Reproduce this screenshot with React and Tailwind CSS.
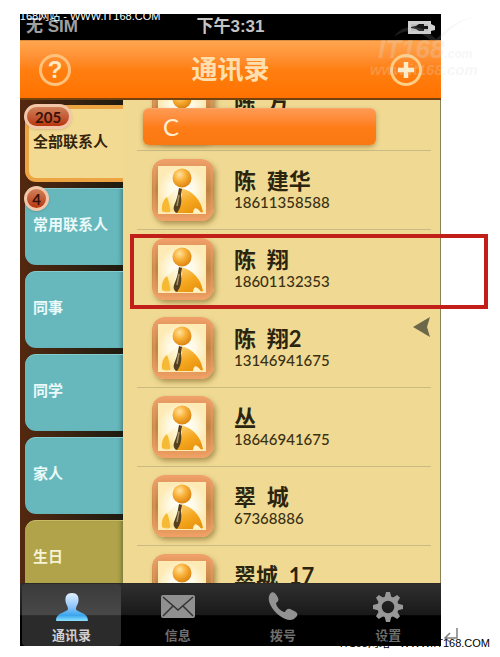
import React from 'react';

const groups = [
    { id: 'all', label: '全部联系人', count: 205, active: true },
    { id: 'favorites', label: '常用联系人', count: 4 },
    { id: 'coworkers', label: '同事' },
    { id: 'classmates', label: '同学' },
    { id: 'family', label: '家人' },
    { id: 'birthday', label: '生日', olive: true }
];

const contacts = [
    { name: '陈  方', phone: '' },
    { name: '陈  建华', phone: '18611358588' },
    { name: '陈  翔', phone: '18601132353' },
    { name: '陈  翔2', phone: '13146941675' },
    { name: '丛', phone: '18646941675' },
    { name: '翠  城', phone: '67368886' },
    { name: '翠城  17', phone: '' }
];

const Defs = () => (
    <svg width="0" height="0" className="absolute" aria-hidden="true">
        <defs>
            <linearGradient id="frame" x1="0" y1="0" x2="0" y2="1">
                <stop offset="0" stopColor="#f0a06a" />
                <stop offset="0.5" stopColor="#bd8440" />
                <stop offset="1" stopColor="#f0a064" />
            </linearGradient>
            <radialGradient id="paper">
                <stop offset="0" stopColor="#ffffff" />
                <stop offset="0.5" stopColor="#fffbe9" />
                <stop offset="1" stopColor="#fdeab4" />
            </radialGradient>
            <radialGradient id="head" cx="0.38" cy="0.32" r="0.7">
                <stop offset="0" stopColor="#ffe3a0" />
                <stop offset="0.5" stopColor="#f8ae34" />
                <stop offset="1" stopColor="#dc8410" />
            </radialGradient>
            <linearGradient id="suit" x1="0" y1="0" x2="0.6" y2="1">
                <stop offset="0" stopColor="#fdd684" />
                <stop offset="0.6" stopColor="#f6a81f" />
                <stop offset="1" stopColor="#e99410" />
            </linearGradient>
            <linearGradient id="arm" x1="1" y1="0" x2="0" y2="1">
                <stop offset="0" stopColor="#fffdf2" />
                <stop offset="0.5" stopColor="#fdedb6" />
                <stop offset="1" stopColor="#f5b62c" />
            </linearGradient>
            <linearGradient id="person" x1="0" y1="0" x2="0" y2="1">
                <stop offset="0" stopColor="#e4f0ff" />
                <stop offset="0.5" stopColor="#8cc4fa" />
                <stop offset="0.8" stopColor="#3ba6ee" />
                <stop offset="1" stopColor="#8be2ff" />
            </linearGradient>
        </defs>
    </svg>
);

const Avatar = () => (
    <svg viewBox="0 0 62 62" className="size-[62px] shrink-0 rounded-[13px] shadow-[2px_3px_5px_rgba(110,80,20,0.5)]" aria-hidden="true">
        <rect width="62" height="62" rx="12" fill="url(#frame)" />
        <rect x="2" y="2" width="58" height="58" rx="10" fill="none" stroke="#f2a36c" strokeWidth="3" opacity="0.4" />
        <rect x="6" y="7" width="48" height="48" fill="url(#paper)" />
        <path d="M27 29 C19 33 11 41 10 52 C14 54 17 54 19 52 L22 53 C24 46 25 36 27 29Z" fill="url(#arm)" />
        <path d="M10 52 C9 45 12 40 15 38 C17 43 18 48 18 53Z" fill="#f5b933" />
        <path d="M29 29 C41 32 49 41 51 53 C48 55 46 50 43 49 L42 54 L23 54 C29 45 31 37 29 29Z" fill="url(#suit)" />
        <path d="M41 54 C41 48 46 48 49 54Z" fill="#fff2c8" />
        <path d="M27 29 L30 30 L29 36 C30 43 29 49 25 54 C22 53 21 50 22 47 C24 42 26 36 26 34Z" fill="#54401f" />
        <path d="M27 36 L25 47" stroke="#a89264" strokeWidth="1.5" />
        <circle cx="30" cy="19" r="9.5" fill="url(#head)" />
    </svg>
);

const GroupTab = ({ group }) => {
    const color = group.active
        ? 'bg-[#f2da92] text-[#33240b] border-4 border-r-0 border-[#eda544]'
        : group.olive
            ? 'bg-[#b0a349] text-[#f6f2d4] border-t border-[#c6bb66] shadow-[inset_-5px_0_5px_-4px_rgba(30,50,40,0.5)]'
            : 'bg-[#67b8bd] text-[#eafafa] border-t border-[#86cccf] shadow-[inset_-5px_0_5px_-4px_rgba(30,50,40,0.5)]';

    return (
        <button className={`relative flex h-[77px] w-full shrink-0 items-center rounded-l-[11px] text-[15px] leading-5 font-bold ${group.active ? 'pl-1' : 'pl-2'} pb-1 ${color}`}>
            {group.label}
            {group.count && (
                <span className={`absolute ${group.active ? '-left-[5px] -top-[5px]' : '-left-px -top-[3px]'} flex h-[25px] min-w-[25px] items-center justify-center rounded-full border-[3px] border-[#f2c7a9] bg-linear-to-b from-[#cf8058] to-[#b8330a] font-['Lato',sans-serif] text-[15px] leading-5 font-bold text-[#381208] shadow ${group.count > 9 ? 'px-2' : ''}`}>
                    {group.count}
                </span>
            )}
        </button>
    );
};

const ContactRow = ({ contact }) => (
    <li className="flex h-[79px] shrink-0 items-center border-b border-[#c9bb83] pl-[15px]">
        <Avatar />
        <div className="ml-5 flex h-[42px] flex-col whitespace-pre text-[#2b240f]">
            <span className="font-['Lato','Noto_Sans_CJK_SC',sans-serif] text-[22px] leading-6 font-bold">{contact.name}</span>
            <span className="font-['Lato',sans-serif] text-[15px] leading-[18px] font-medium text-[#3a3113]">{contact.phone}</span>
        </div>
    </li>
);

const ContactsIcon = () => (
    <svg viewBox="0 0 34 30" className="h-[30px] w-[34px]" aria-hidden="true">
        <path d="M17 1 C22 1 24 4 23.500 9 C23 13 21 14 21 17 C21 20 32 20 33 28 C33 29 32 29 31 29 L3 29 C2 29 1 29 1 28 C2 20 13 20 13 17 C13 14 11 13 10.500 9 C10 4 12 1 17 1Z" fill="url(#person)" />
    </svg>
);

const MailIcon = () => (
    <svg viewBox="0 0 34 30" className="h-[30px] w-[34px]" aria-hidden="true">
        <rect x="0" y="3" width="34" height="23" rx="2" fill="#909090" />
        <path d="M2 5 L17 18 L32 5 M2 24 L12 14 M32 24 L22 14" fill="none" stroke="#333" strokeWidth="1.5" />
    </svg>
);

const PhoneIcon = () => (
    <svg viewBox="0 0 34 30" className="h-[30px] w-[34px]" aria-hidden="true">
        <path d="M4 2 C6 -1 9 0 11 4 C13 7 13 9 10 11 C10 14 15 20 19 20 C21 16 23 16 26 18 C31 20 33 22 30 25 C27 29 21 29 14 24 C6 18 0 8 4 2Z" fill="#929292" />
    </svg>
);

const GearIcon = () => (
    <svg viewBox="0 0 34 30" className="h-[30px] w-[34px]" aria-hidden="true">
        <g transform="translate(17 15)" fill="#989898">
            {[0, 45, 90, 135, 180, 225, 270, 315].map((angle) => (
                <path key={angle} d="M-3.500 -9 L-2 -15 L2 -15 L3.500 -9Z" transform={`rotate(${angle})`} />
            ))}
            <circle r="8.5" fill="none" stroke="#989898" strokeWidth="4.5" />
        </g>
    </svg>
);

const tabs = [
    { label: '通讯录', icon: ContactsIcon, active: true },
    { label: '信息', icon: MailIcon },
    { label: '拨号', icon: PhoneIcon },
    { label: '设置', icon: GearIcon }
];

const StatusBar = () => (
    <div className="grid h-[26px] shrink-0 grid-cols-3 items-center bg-black px-[6px] text-[17px] leading-6 font-bold text-[#a0a0a0]">
        <span>无 SIM</span>
        <span className="text-center text-[#c4c4c4]">下午3:31</span>
        <svg viewBox="0 0 27 13" className="h-[13px] w-[27px] justify-self-end" aria-label="Battery">
            <path d="M0 0 H23 V3 L27 5 V9 L23 10 V13 H0Z" fill="#cfcfcf" />
            <path d="M3 3 H20 V10 H3Z" fill="#bdbdbd" />
            <path d="M3 6 L8 5 L11 3 H16 V5 H20 V8 H16 V10 H11 L8 8 L3 7Z" fill="#161616" />
        </svg>
    </div>
);

const Header = () => (
    <header className="flex h-[58px] shrink-0 items-center justify-between border-t border-[#d98b40] bg-linear-to-b from-[#ffa64f] via-[#ff7f10] to-[#ff7200] px-[19px] text-[#ffdfae]">
        <button aria-label="Help" className="flex size-8 items-center justify-center rounded-full border-[3px] border-[#ffc27c] font-['Liberation_Sans',sans-serif] text-2xl leading-6 font-bold text-[#ffe9c4]">?</button>
        <h1 className="text-[26px] leading-8 font-bold">通讯录</h1>
        <button aria-label="Add contact" className="flex size-8 items-center justify-center rounded-full border-[3px] border-[#ffcd85]">
            <svg viewBox="0 0 18 18" className="size-[18px]" aria-hidden="true">
                <path d="M9 1 V17 M1 9 H17" stroke="#ffedc8" strokeWidth="4.500" />
            </svg>
        </button>
    </header>
);

const TabBar = () => (
    <nav className="grid h-[63px] shrink-0 grid-cols-4 border-t border-[#2c2a26] bg-[linear-gradient(#2f2f2f_0,#191919_50%,#000_51%)]">
        {tabs.map(({ label, icon: Icon, active }) => (
            <button
                key={label}
                className={`flex flex-col items-center gap-1 pt-2 text-[13px] leading-5 font-bold ${active ? 'mb-[3px] ml-[2px] mr-1 rounded bg-[linear-gradient(#3b3b3b,#484848_50%,#2b2b2b_51%)] text-[#d0d0d0]' : 'text-[#6e6e6e]'}`}
            >
                <Icon />
                {label}
            </button>
        ))}
    </nav>
);

const Watermark = () => (
    <div className="pointer-events-none absolute right-5 top-[17px] w-[110px] font-['Liberation_Sans',sans-serif] font-bold italic text-[#dedede]/25">
        <svg viewBox="0 0 110 24" className="w-full" aria-hidden="true">
            <path d="M24 20 C30 10 44 6 56 14 L66 22 C78 10 90 2 104 0 C90 4 78 12 70 23 L60 23 C48 12 34 12 24 20Z" fill="#cccccc" opacity="0.15" />
        </svg>
        <div className="-mt-1 pl-2 text-[26px] leading-6">IT168<span className="text-xs">.com</span></div>
        <div className="text-[15px] leading-4">www.it168.com</div>
    </div>
);

export default function App() {
    return (
        <div className="relative flex h-screen flex-col overflow-hidden bg-white pt-[14px] pr-[59px] pb-[11px] pl-5 font-['Liberation_Sans','Noto_Sans_CJK_SC',sans-serif]">
            <Defs />
            <main className="flex min-h-0 flex-1 flex-col overflow-hidden">
                <StatusBar />
                <Header />
                <div className="flex min-h-0 flex-1 border-t-2 border-[#75420f] bg-[#30180a]">
                    <aside className="flex w-[103px] shrink-0 flex-col gap-[6px] overflow-hidden bg-linear-to-r from-[#54280f] to-[#1e1b10] pt-[5px] pl-[5px]">
                        {groups.map((group) => (
                            <GroupTab key={group.id} group={group} />
                        ))}
                    </aside>
                    <section className="relative min-w-0 flex-1 overflow-hidden border-r border-[#8c8058] bg-[#efd993]">
                        <ul className="-mt-7 mr-[9px] ml-[14px] flex flex-col">
                            {contacts.map((contact) => (
                                <ContactRow key={contact.name} contact={contact} />
                            ))}
                        </ul>
                        <h2 className="absolute top-2 right-16 left-5 flex h-[37px] items-center rounded-md border-t border-[#f9a468] bg-linear-to-b from-[#fd9a52] via-[#ff7d17] to-[#f97812] pl-5 font-['Lato',sans-serif] text-2xl leading-8 text-[#ffeed0] shadow-[0_2px_4px_rgba(140,90,30,0.5)]">C</h2>
                        <svg viewBox="0 0 18 20" className="absolute top-[217px] right-[9px] h-5 w-[18px]" aria-hidden="true">
                            <path d="M0 10 L17 0 L14 10 L17 20Z" fill="#6c6849" />
                        </svg>
                    </section>
                </div>
                <TabBar />
            </main>
            <div className="pointer-events-none absolute top-[234px] right-3 left-[130px] h-[75px] border-4 border-[#c21f18]" />
            <Watermark />
            <p className="absolute top-2 left-[10px] text-[11px] leading-4 text-white">IT168网站 - WWW.IT168.COM</p>
            <svg viewBox="0 0 16 18" className="absolute right-[41px] bottom-3 h-[18px] w-4" aria-hidden="true">
                <path d="M14 1 V11 H3 M7 6 L2 11 L7 15" fill="none" stroke="#808080" strokeWidth="1.500" />
            </svg>
            <p className="absolute right-[10px] bottom-[6px] text-[11px] leading-4 text-black">IT168网站 - WWW.IT168.COM</p>
        </div>
    );
}
